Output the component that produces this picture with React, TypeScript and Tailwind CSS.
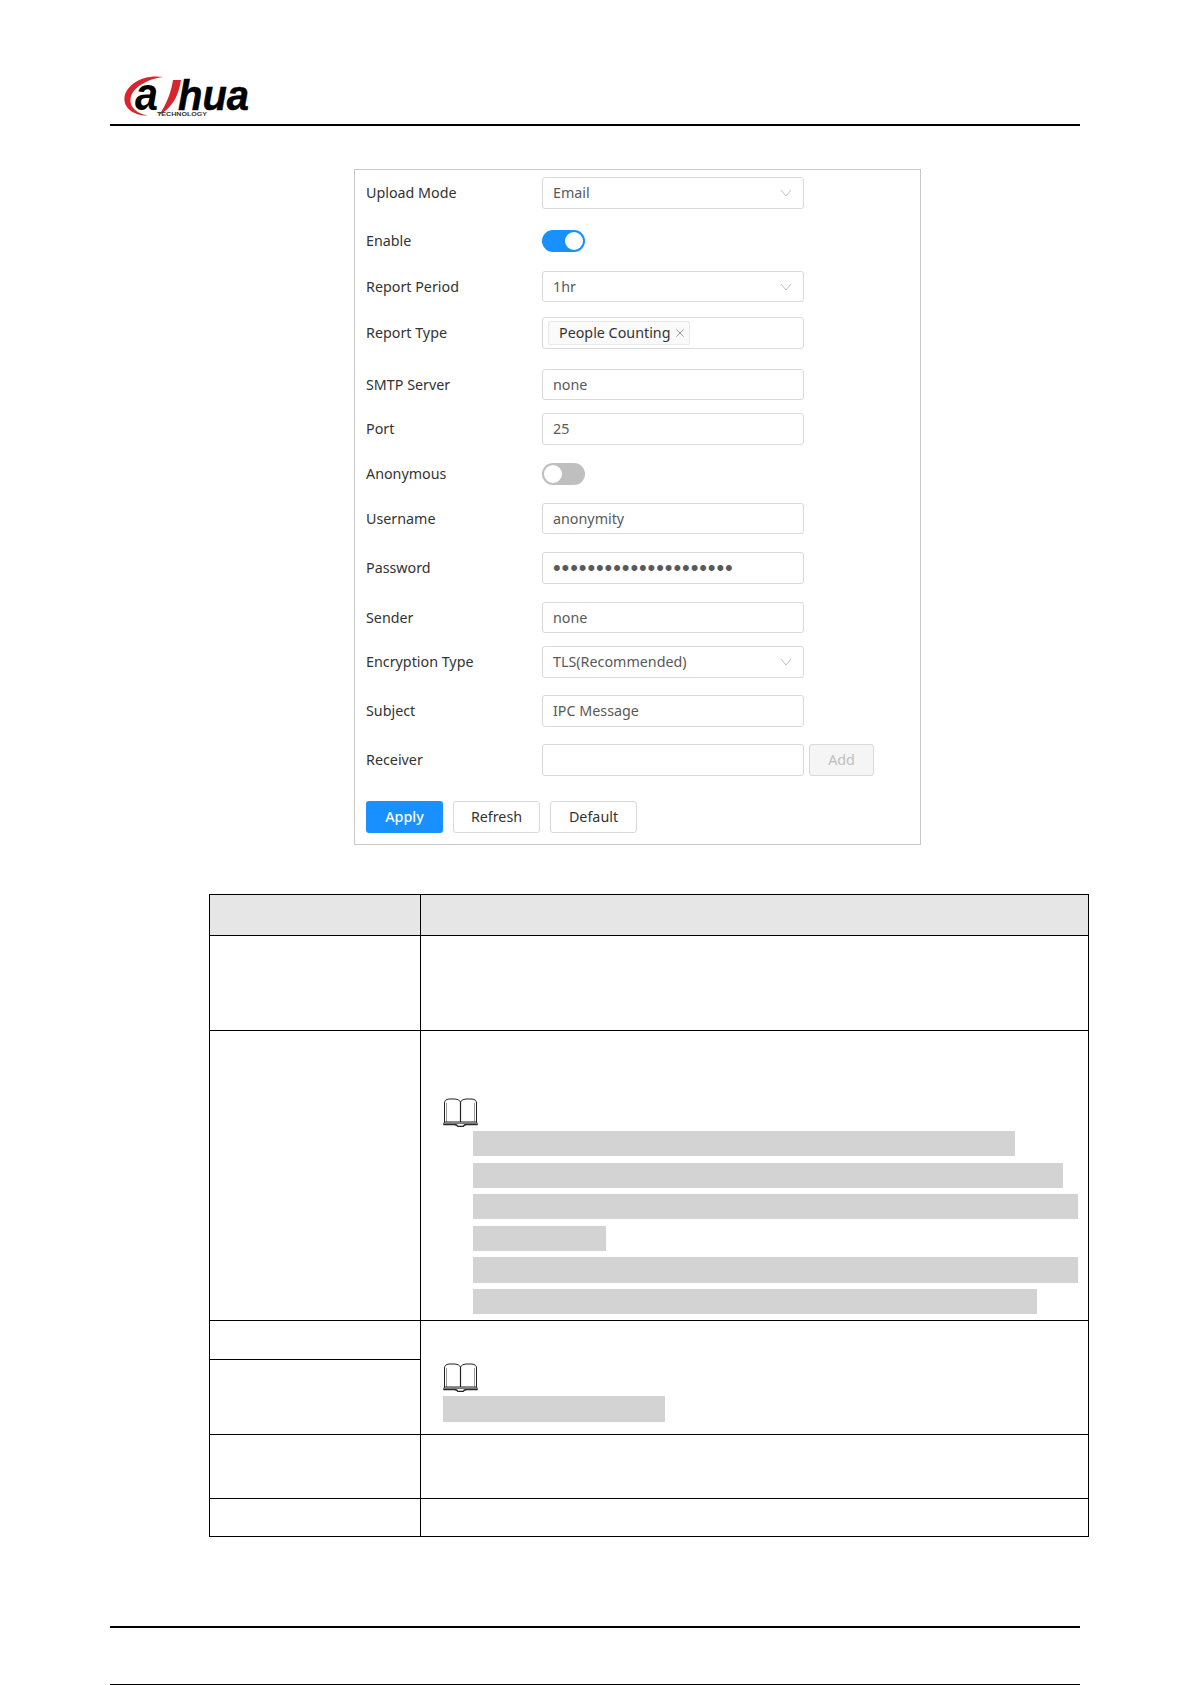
import React from "react";

const font = "[font-family:'Noto_Sans','Open_Sans',sans-serif]";

function Chevron() {
  return (
    <svg width="12" height="8" viewBox="0 0 12 8" className="absolute right-[11px] top-1/2 -translate-y-1/2" fill="none" stroke="#bfbfbf" strokeWidth="1">
      <path d="M1 1 L6 7 L11 1" />
    </svg>
  );
}

function Box({ h, children, select }: { h: string; children?: React.ReactNode; select?: boolean }) {
  return (
    <div className={`relative w-[262px] ${h} flex items-center rounded-[3px] border border-[#d9d9d9] bg-white pl-[10px] text-[14.3px] text-[#595959]`}>
      {children}
      {select && <Chevron />}
    </div>
  );
}

function Row({ label, mt, children }: { label: string; mt: string; children: React.ReactNode }) {
  return (
    <div className={`flex items-center ${mt}`}>
      <div className="w-[187px] shrink-0 pl-[11px] text-[14.3px] leading-[20px] text-[#333]">{label}</div>
      {children}
    </div>
  );
}

function Toggle({ on }: { on?: boolean }) {
  return (
    <div className={`flex h-[22px] w-[43px] items-center rounded-full p-[2px] ${on ? "justify-end bg-[#1890ff]" : "justify-start bg-[#bfbfbf]"}`}>
      <div className="h-[18px] w-[18px] rounded-full bg-white" />
    </div>
  );
}

function Book() {
  return (
    <svg width="35" height="29" viewBox="0 0 35 29" fill="none" stroke="#222" strokeWidth="1" className="block">
      <path d="M1.5 24 V5 Q1.5 1.5 6 1 H12 Q16 1 17.5 4 Q19 1 23 1 H29 Q33.5 1.5 33.5 5 V24" />
      <path d="M3.5 24 V5 M31.5 24 V5" stroke="#999" />
      <path d="M17.5 4 V24" strokeWidth="1.2" />
      <path d="M1.5 24 H33.5" strokeWidth="1" />
      <path d="M0.5 26.5 H11 Q14 26.5 15 28.5 H20 Q21 26.5 24 26.5 H34.5" strokeWidth="1.4" />
      <path d="M1.5 24 L0.5 26.5 M33.5 24 L34.5 26.5" />
      <path d="M2 25.3 H33" stroke="#777" strokeWidth="1.6" />
    </svg>
  );
}

function Bar({ w, h = "h-[25px]", mt }: { w: string; h?: string; mt: string }) {
  return <div className={`${w} ${h} ${mt} bg-[#d3d3d3]`} />;
}

function Logo() {
  return (
    <svg width="132" height="42" viewBox="0 0 132 42" className="block overflow-visible">
      <path d="M40 2 C22 -1 4 8 1.5 22 C0 33 11 41 25 40.5 C15 39 6.5 33 7.5 24 C9 12 25 4 40 2 Z" fill="#d8262f" />
      <text x="12" y="35" fontFamily="'Liberation Sans',sans-serif" fontWeight="700" fontStyle="italic" fontSize="46" fill="#000" textLength="23" lengthAdjust="spacingAndGlyphs">a</text>
      <path d="M50 5 L58 5 C56 18 51 32 36 40 C43 30 48 18 50 5 Z" fill="#d8262f" />
      <text x="55" y="35" fontFamily="'Liberation Sans',sans-serif" fontWeight="700" fontStyle="italic" fontSize="42" fill="#000" stroke="#000" strokeWidth="0.5" textLength="71" lengthAdjust="spacingAndGlyphs">hua</text>
      <text x="34" y="40.5" fontFamily="'Liberation Sans',sans-serif" fontWeight="700" fontSize="5.5" fill="#333" textLength="50" lengthAdjust="spacingAndGlyphs">TECHNOLOGY</text>
    </svg>
  );
}

export default function App() {
  return (
    <div className={`relative h-[1685px] w-[1192px] overflow-hidden bg-white ${font}`}>
      <header className="ml-[110px] w-[970px] border-b-2 border-black pl-[13px] pt-[75px] pb-[7px]">
        <Logo />
      </header>

      <section className="ml-[354px] mt-[43px] h-[676px] w-[567px] border border-[#c8c8c8] pt-[7px]">
        <Row label="Upload Mode" mt="mt-0"><Box h="h-[32px]" select>Email</Box></Row>
        <Row label="Enable" mt="mt-[21px]"><Toggle on /></Row>
        <Row label="Report Period" mt="mt-[19px]"><Box h="h-[31px]" select>1hr</Box></Row>
        <Row label="Report Type" mt="mt-[15px]">
          <Box h="h-[32px]">
            <span className="-ml-[5px] flex h-[24px] items-center rounded-[2px] border border-[#e8e8e8] bg-[#fafafa] pl-[10px] pr-[5px] text-[#333]">
              People Counting
              <svg width="8" height="8" viewBox="0 0 8 8" className="ml-[6px]" stroke="#999" fill="none"><path d="M0.5 0.5 L7.5 7.5 M7.5 0.5 L0.5 7.5" /></svg>
            </span>
          </Box>
        </Row>
        <Row label="SMTP Server" mt="mt-[20px]"><Box h="h-[31px]">none</Box></Row>
        <Row label="Port" mt="mt-[13px]"><Box h="h-[32px]">25</Box></Row>
        <Row label="Anonymous" mt="mt-[18px]"><Toggle /></Row>
        <Row label="Username" mt="mt-[18px]"><Box h="h-[31px]">anonymity</Box></Row>
        <Row label="Password" mt="mt-[18px]"><Box h="h-[32px]"><span className="[font-family:'Liberation_Sans',sans-serif] text-[22px] leading-[20px] tracking-[0.9px] text-[#595959]">•••••••••••••••••••••</span></Box></Row>
        <Row label="Sender" mt="mt-[18px]"><Box h="h-[31px]">none</Box></Row>
        <Row label="Encryption Type" mt="mt-[13px]"><Box h="h-[32px]" select>TLS(Recommended)</Box></Row>
        <Row label="Subject" mt="mt-[17px]"><Box h="h-[32px]">IPC Message</Box></Row>
        <Row label="Receiver" mt="mt-[17px]">
          <Box h="h-[32px]" />
          <button className="ml-[5px] h-[32px] w-[65px] rounded-[3px] border border-[#d9d9d9] bg-[#f5f5f5] text-[14.3px] text-[#bfbfbf]">Add</button>
        </Row>
        <div className="ml-[11px] mt-[25px] flex gap-[10px]">
          <button className="h-[32px] w-[77px] rounded-[3px] bg-[#1890ff] text-[14.3px] font-medium text-white">Apply</button>
          <button className="h-[32px] w-[87px] rounded-[3px] border border-[#d9d9d9] bg-white text-[14.3px] text-[#333]">Refresh</button>
          <button className="h-[32px] w-[87px] rounded-[3px] border border-[#d9d9d9] bg-white text-[14.3px] text-[#333]">Default</button>
        </div>
      </section>

      <table className="ml-[209px] mt-[49px] w-[880px] table-fixed border-collapse">
        <colgroup>
          <col className="w-[211px]" />
          <col />
        </colgroup>
        <tbody>
          <tr className="h-[41px] bg-[#e6e6e6]">
            <td className="border border-black" />
            <td className="border border-black" />
          </tr>
          <tr className="h-[95px]">
            <td className="border border-black" />
            <td className="border border-black" />
          </tr>
          <tr className="h-[290px]">
            <td className="border border-black" />
            <td className="border border-black p-0 align-top">
              <div className="ml-[22px] mt-[67px]"><Book /></div>
              <div className="ml-[52px]">
                <Bar w="w-[542px]" mt="mt-[4px]" />
                <Bar w="w-[590px]" mt="mt-[7px]" />
                <Bar w="w-[605px]" mt="mt-[6px]" />
                <Bar w="w-[133px]" mt="mt-[7px]" />
                <Bar w="w-[605px]" h="h-[26px]" mt="mt-[6px]" />
                <Bar w="w-[564px]" mt="mt-[6px]" />
              </div>
            </td>
          </tr>
          <tr className="h-[39px]">
            <td className="border border-black" />
            <td rowSpan={2} className="border border-black p-0 align-top">
              <div className="ml-[22px] mt-[42px]"><Book /></div>
              <Bar w="w-[222px] ml-[22px]" h="h-[26px]" mt="mt-[4px]" />
            </td>
          </tr>
          <tr className="h-[75px]">
            <td className="border border-black" />
          </tr>
          <tr className="h-[64px]">
            <td className="border border-black" />
            <td className="border border-black" />
          </tr>
          <tr className="h-[38px]">
            <td className="border border-black" />
            <td className="border border-black" />
          </tr>
        </tbody>
      </table>

      <footer className="ml-[110px] mt-[89px] h-[2px] w-[970px] bg-black" />
      <div className="ml-[110px] mt-[56px] h-px w-[970px] bg-black" />
    </div>
  );
}
